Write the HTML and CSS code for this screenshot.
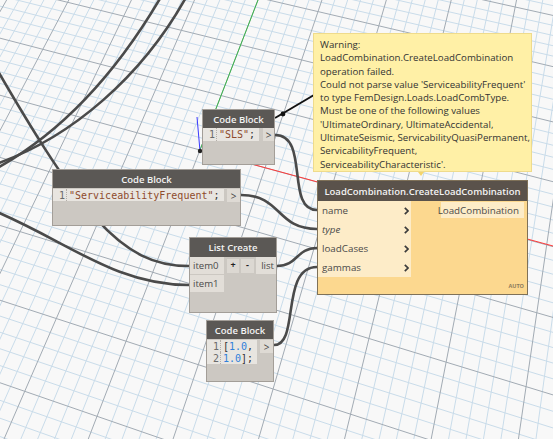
FILE: index.html
```html
<!DOCTYPE html>
<html>
<head>
<meta charset="utf-8">
<link rel="stylesheet" href="styles.css">
</head>
<body>
<div class="canvas">
  <svg class="layer" id="grid" width="553" height="439"></svg>
  <svg class="layer" width="553" height="439">
    <line x1="200" y1="150" x2="553" y2="246" stroke="#ff3b3b" stroke-width="1"/>
    <line x1="200" y1="150" x2="258" y2="0" stroke="#3bb54a" stroke-width="1"/>
    <line x1="197" y1="117" x2="200" y2="151" stroke="#3a3aff" stroke-width="1"/>
    <circle cx="200" cy="151" r="2.2" fill="#222"/>
    <g fill="none" stroke="#4a4a4a" stroke-width="2.6">
      <path d="M165,-10 C125,60 70,130 -10,172"/>
      <path d="M190,-10 C145,75 70,140 -10,166"/>
      <path d="M-20,40 C80,215 120,266 189,266"/>
      <path d="M-20,205 C60,235 110,285 189,285"/>
      <path d="M275,135 C310,135 285,210 317,210"/>
      <path d="M241,195 C282,195 276,229 317,229"/>
      <path d="M277,266 C298,266 296,248 317,248"/>
      <path d="M274,345 C300,345 280,267 317,267"/>
    </g>
    <line x1="275" y1="118" x2="314" y2="95" stroke="#111" stroke-width="2"/>
    <circle cx="283" cy="114" r="2.4" fill="#111"/>
  </svg>

  <div class="node cb n-sls">
    <div class="hdr">Code Block</div>
    <div class="cb-body">
      <div class="code">
        <div class="line"><span class="num">1</span><span class="txt"><span class="str">"SLS"</span><span class="pun">;</span></span></div>
      </div>
      <div class="out">&gt;</div>
    </div>
  </div>

  <div class="node cb n-sf">
    <div class="hdr">Code Block</div>
    <div class="cb-body">
      <div class="code">
        <div class="line"><span class="num">1</span><span class="txt"><span class="str">"ServiceabilityFrequent"</span><span class="pun">;</span></span></div>
      </div>
      <div class="out">&gt;</div>
    </div>
  </div>

  <div class="node lc">
    <div class="hdr hdr-lc">List Create</div>
    <div class="lc-row">
      <div class="inport">item0</div>
      <div class="btn btn-plus">+</div>
      <div class="btn btn-minus">-</div>
      <div class="outport">list</div>
    </div>
    <div class="lc-row">
      <div class="inport">item1</div>
    </div>
  </div>

  <div class="node cb n-num">
    <div class="hdr">Code Block</div>
    <div class="cb-body">
      <div class="code">
        <div class="line"><span class="num">1</span><span class="txt"><span class="pun">[</span><span class="nl">1.0</span><span class="pun">,</span></span></div>
        <div class="line"><span class="num">2</span><span class="txt"><span class="nl">1.0</span><span class="pun">];</span></span></div>
      </div>
      <div class="out">&gt;</div>
    </div>
  </div>

  <div class="node lcc">
    <div class="hdr hdr-lcc">LoadCombination.CreateLoadCombination</div>
    <div class="lcc-main">
      <div class="lcc-cols">
        <div class="inputs">
          <div class="port"><span>name</span><svg class="chev" width="5" height="8" viewBox="0 0 5 8"><polyline points="0.8,0.8 4,4 0.8,7.2" fill="none" stroke="#3c3c3c" stroke-width="1.7"/></svg></div>
          <div class="port"><span class="it">type</span><svg class="chev" width="5" height="8" viewBox="0 0 5 8"><polyline points="0.8,0.8 4,4 0.8,7.2" fill="none" stroke="#3c3c3c" stroke-width="1.7"/></svg></div>
          <div class="port"><span>loadCases</span><svg class="chev" width="5" height="8" viewBox="0 0 5 8"><polyline points="0.8,0.8 4,4 0.8,7.2" fill="none" stroke="#3c3c3c" stroke-width="1.7"/></svg></div>
          <div class="port"><span>gammas</span><svg class="chev" width="5" height="8" viewBox="0 0 5 8"><polyline points="0.8,0.8 4,4 0.8,7.2" fill="none" stroke="#3c3c3c" stroke-width="1.7"/></svg></div>
        </div>
        <div class="outputs">
          <div class="oport">LoadCombination</div>
        </div>
      </div>
      <div class="auto">AUTO</div>
    </div>
  </div>

  <div class="tip">Warning:<br>LoadCombination.CreateLoadCombination<br>operation failed.<br>Could not parse value 'ServiceabilityFrequent'<br>to type FemDesign.Loads.LoadCombType.<br>Must be one of the following values<br>'UltimateOrdinary, UltimateAccidental,<br>UltimateSeismic, ServicabilityQuasiPermanent,<br>ServicabilityFrequent,<br>ServiceabilityCharacteristic'.</div>
  <div class="tip-arrow"></div>
</div>
<script src="script.js"></script>
</body>
</html>
```
FILE: styles.css
```css
html, body {
  margin: 0;
  padding: 0;
  background: #f8f8f8;
  overflow: hidden;
}
.canvas {
  position: relative;
  width: 553px;
  height: 439px;
  overflow: hidden;
  background: #f8f8f8;
  font-family: "Open Sans", sans-serif;
}
.layer {
  position: absolute;
  left: 0;
  top: 0;
}
.node {
  position: absolute;
  box-sizing: border-box;
  border: 1px solid #a39e98;
  background: #ccc8c2;
  display: flex;
  flex-direction: column;
}
.hdr {
  height: 18px;
  flex: none;
  background: #5b5855;
  color: #f3f3f3;
  font-size: 9.5px;
  font-weight: 600;
  display: flex;
  align-items: center;
  justify-content: center;
  white-space: nowrap;
}
.cb-body {
  display: flex;
  align-items: flex-start;
}
.code {
  background: #e8e5e0;
  display: flex;
  flex-direction: column;
  padding-right: 4px;
}
.line {
  display: flex;
  height: 12px;
  align-items: center;
  font-family: "DejaVu Sans Mono", monospace;
  font-size: 10px;
  white-space: pre;
}
.n-sls .line { height: 13px; }
.num {
  width: 12px;
  padding-right: 1px;
  text-align: right;
  color: #6b6b6b;
  border-right: 1px dotted #b3aea8;
  height: 100%;
  display: flex;
  align-items: center;
  justify-content: flex-end;
}
.txt { padding-left: 2px; }
.str { color: #8e4b2c; }
.nl { color: #2f80da; }
.pun { color: #333; }
.out {
  margin-left: auto;
  width: 11px;
  height: 13px;
  background: #dedad4;
  color: #444;
  font-size: 10px;
  display: flex;
  align-items: center;
  justify-content: center;
}
.n-sls { left: 202px; top: 109px; width: 73px; height: 56px; }
.n-sf { left: 52px; top: 169px; width: 189px; height: 57px; }
.n-sf .cb-body { margin-top: 1px; }
.n-sf .out { width: 13px; }
.n-num { left: 206px; top: 320px; width: 68px; height: 62px; }
.n-num .cb-body { margin-top: 1px; }
.n-num .out { width: 13px; }

.lc { left: 189px; top: 237px; width: 88px; height: 76px; }
.hdr-lc { height: 19px; }
.lc-row {
  display: flex;
  align-items: center;
  height: 17px;
  margin-bottom: 1px;
}
.inport {
  width: 31px;
  height: 17px;
  padding-left: 3px;
  background: #e2ded8;
  color: #4a4a4a;
  font-size: 9.6px;
  display: flex;
  align-items: center;
}
.btn {
  height: 14px;
  background: #dcd8d2;
  color: #222;
  font-size: 9px;
  font-weight: 700;
  display: flex;
  align-items: flex-start;
  justify-content: center;
  line-height: 11px;
}
.btn-plus { width: 12px; margin-left: 3px; }
.btn-minus { width: 13px; margin-left: 2px; }
.outport {
  margin-left: auto;
  width: 18px;
  height: 17px;
  padding-right: 2px;
  background: #e2ded8;
  color: #4a4a4a;
  font-size: 9.6px;
  display: flex;
  align-items: center;
  justify-content: flex-end;
}

.lcc {
  left: 317px;
  top: 180px;
  width: 211px;
  height: 115px;
  border-color: #7f7158;
  background: #fcd88f;
}
.hdr-lcc { height: 20px; background: #5a524b; }
.lcc-main {
  flex: 1;
  display: flex;
  flex-direction: column;
}
.lcc-cols { display: flex; align-items: flex-start; }
.inputs {
  width: 93px;
  background: #fdecc8;
  padding-bottom: 0;
}
.port {
  height: 19px;
  display: flex;
  align-items: center;
  justify-content: space-between;
  padding-left: 4px;
  padding-right: 2px;
  font-size: 9.8px;
  color: #4a4a4a;
}
.it { font-style: italic; }
.outputs {
  margin-left: auto;
  margin-top: 1px;
  margin-right: 3px;
}
.oport {
  width: 78px;
  height: 16px;
  padding-right: 5px;
  background: #fdecc8;
  color: #4a4a4a;
  font-size: 9.8px;
  display: flex;
  align-items: center;
  justify-content: flex-end;
}
.auto {
  margin-top: auto;
  align-self: flex-end;
  margin-right: 3px;
  margin-bottom: 4px;
  font-size: 5.5px;
  font-weight: 700;
  color: #8c7b5c;
}

.tip {
  position: absolute;
  left: 313px;
  top: 33px;
  width: 219px;
  height: 139px;
  box-sizing: border-box;
  background: #fff0a6;
  border: 1px solid #efdb8c;
  padding: 4px 6px;
  font-size: 9.7px;
  line-height: 13.3px;
  color: #333;
  white-space: nowrap;
}
.tip-arrow {
  position: absolute;
  left: 418px;
  top: 172px;
  width: 0;
  height: 0;
  border-left: 3px solid transparent;
  border-right: 3px solid transparent;
  border-top: 4px solid #f3d46c;
}
```
FILE: script.js
```js
(function () {
  var svg = document.getElementById('grid');
  var NS = 'http://www.w3.org/2000/svg';
  var O = [200, 150], VH = [-4000, -1000], VV = [778, -1345];
  var a = 0.00305, b = 0.00756;
  function P(u, v) {
    var w = 1 + a * u + b * v;
    return [(O[0] + a * u * VH[0] + b * v * VV[0]) / w,
            (O[1] + a * u * VH[1] + b * v * VV[1]) / w];
  }
  var minor = document.createElementNS(NS, 'g');
  minor.setAttribute('stroke', '#c9dcea');
  minor.setAttribute('stroke-width', '1');
  var major = document.createElementNS(NS, 'g');
  major.setAttribute('stroke', '#a2abb4');
  major.setAttribute('stroke-width', '1');
  function line(g, p, q) {
    var l = document.createElementNS(NS, 'line');
    l.setAttribute('x1', p[0].toFixed(2));
    l.setAttribute('y1', p[1].toFixed(2));
    l.setAttribute('x2', q[0].toFixed(2));
    l.setAttribute('y2', q[1].toFixed(2));
    g.appendChild(l);
  }
  var U0 = -70, U1 = 40, V0 = -90, V1 = 150;
  for (var u = U0; u <= U1; u++) {
    line(u % 5 === 0 ? major : minor, P(u, V0), P(u, V1));
  }
  for (var v = V0; v <= V1; v++) {
    line(v % 5 === 0 ? major : minor, P(U0, v), P(U1, v));
  }
  svg.appendChild(minor);
  svg.appendChild(major);
})();
```
